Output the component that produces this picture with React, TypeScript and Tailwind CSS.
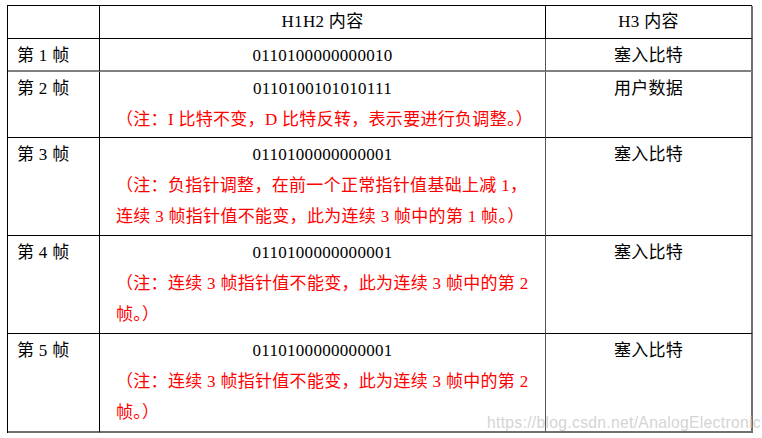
const rows = [
  { name: '第 1 帧', code: '0110100000000010', note: [], h3: '塞入比特', h: 'h-[33px]', line: 'border-b-2 border-b-[#808080]' },
  {
    name: '第 2 帧',
    code: '0110100101010111',
    note: ['（注：I 比特不变，D 比特反转，表示要进行负调整。）'],
    h3: '用户数据',
    h: 'h-[66px]',
    line: 'border-b border-b-black',
  },
  {
    name: '第 3 帧',
    code: '0110100000000001',
    note: ['（注：负指针调整，在前一个正常指针值基础上减 1，', '连续 3 帧指针值不能变，此为连续 3 帧中的第 1 帧。）'],
    h3: '塞入比特',
    h: 'h-[98px]',
    line: 'border-b border-b-black',
  },
  {
    name: '第 4 帧',
    code: '0110100000000001',
    note: ['（注：连续 3 帧指针值不能变，此为连续 3 帧中的第 2', '帧。）'],
    h3: '塞入比特',
    h: 'h-[98px]',
    line: 'border-b border-b-black',
  },
  {
    name: '第 5 帧',
    code: '0110100000000001',
    note: ['（注：连续 3 帧指针值不能变，此为连续 3 帧中的第 2', '帧。）'],
    h3: '塞入比特',
    h: 'h-[99px]',
    line: 'border-b-2 border-b-[#707070]',
  },
]

export default function App() {
  return (
    <div className="relative h-[438px] w-[762px] overflow-hidden bg-white pl-[7px] pt-[5px] font-['Liberation_Serif','Noto_Sans_CJK_SC',serif] text-[17px] tracking-[0.3px] text-black">
      <div className="grid w-[745px] grid-cols-[92px_446px_207px] border-l border-t border-black">
        <div className="h-[33px] border-b border-r border-black" />
        <div className="flex h-[33px] items-center justify-center border-b border-r border-black">H1H2 内容</div>
        <div className="flex h-[33px] items-center justify-center border-b border-r-2 border-black border-r-[#707070]">
          H3 内容
        </div>

        {rows.map((r) => (
          <div key={r.name} className="contents">
            <div className={`${r.h} border-r border-black pl-[9px] pt-[1px] leading-[31px] ${r.line}`}>{r.name}</div>
            <div className={`${r.h} border-r border-[#555] pt-[1px] leading-[31px] ${r.line}`}>
              <div className="text-center">{r.code}</div>
              {r.note.length > 0 && (
                <div className={`pl-[16px] pr-[12px] text-[#ff0000] ${r.note.length === 1 ? 'text-center' : 'text-left'}`}>
                  {r.note.map((n) => (
                    <div key={n} className="whitespace-nowrap">
                      {n}
                    </div>
                  ))}
                </div>
              )}
            </div>
            <div className={`${r.h} border-r-2 border-r-[#707070] pt-[1px] text-center leading-[31px] ${r.line}`}>{r.h3}</div>
          </div>
        ))}
      </div>
      <div className="absolute left-[487px] top-[411px] font-['Liberation_Sans',sans-serif] text-[15.7px] text-[#d4d4d4]">
        https://blog.csdn.net/AnalogElectronic
      </div>
    </div>
  )
}
